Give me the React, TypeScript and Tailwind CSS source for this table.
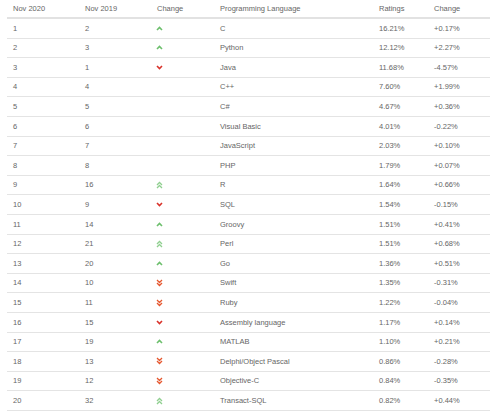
const rows: [string, string, string, string, string, string][] = [
  ['1', '2', 'up', 'C', '16.21%', '+0.17%'],
  ['2', '3', 'up', 'Python', '12.12%', '+2.27%'],
  ['3', '1', 'down', 'Java', '11.68%', '-4.57%'],
  ['4', '4', '', 'C++', '7.60%', '+1.99%'],
  ['5', '5', '', 'C#', '4.67%', '+0.36%'],
  ['6', '6', '', 'Visual Basic', '4.01%', '-0.22%'],
  ['7', '7', '', 'JavaScript', '2.03%', '+0.10%'],
  ['8', '8', '', 'PHP', '1.79%', '+0.07%'],
  ['9', '16', 'upup', 'R', '1.64%', '+0.66%'],
  ['10', '9', 'down', 'SQL', '1.54%', '-0.15%'],
  ['11', '14', 'up', 'Groovy', '1.51%', '+0.41%'],
  ['12', '21', 'upup', 'Perl', '1.51%', '+0.68%'],
  ['13', '20', 'up', 'Go', '1.36%', '+0.51%'],
  ['14', '10', 'downdown', 'Swift', '1.35%', '-0.31%'],
  ['15', '11', 'downdown', 'Ruby', '1.22%', '-0.04%'],
  ['16', '15', 'down', 'Assembly language', '1.17%', '+0.14%'],
  ['17', '19', 'up', 'MATLAB', '1.10%', '+0.21%'],
  ['18', '13', 'downdown', 'Delphi/Object Pascal', '0.86%', '-0.28%'],
  ['19', '12', 'downdown', 'Objective-C', '0.84%', '-0.35%'],
  ['20', '32', 'upup', 'Transact-SQL', '0.82%', '+0.44%'],
]

function Arrow({ kind }: { kind: string }) {
  if (kind === 'up')
    return (
      <svg width="7" height="5" viewBox="0 0 7 5">
        <path d="M1 4 L3.5 1.5 L6 4" fill="none" stroke="#6cbf6c" strokeWidth="1.6" />
      </svg>
    )
  if (kind === 'down')
    return (
      <svg width="7" height="5" viewBox="0 0 7 5">
        <path d="M1 1 L3.5 3.5 L6 1" fill="none" stroke="#d9322a" strokeWidth="1.6" />
      </svg>
    )
  if (kind === 'upup')
    return (
      <svg width="7" height="8" viewBox="0 0 7 8">
        <path d="M1 4 L3.5 1.5 L6 4 M1 7 L3.5 4.5 L6 7" fill="none" stroke="#8fcf8f" strokeWidth="1.3" />
      </svg>
    )
  if (kind === 'downdown')
    return (
      <svg width="7" height="8" viewBox="0 0 7 8">
        <path d="M1 1 L3.5 3.5 L6 1 M1 4 L3.5 6.5 L6 4" fill="none" stroke="#e5572f" strokeWidth="1.3" />
      </svg>
    )
  return null
}

const cols = 'grid grid-cols-[72px_72px_63px_159px_55px_62px]'

export default function App() {
  return (
    <div className="w-[500px] h-[419px] bg-white pl-[7px] text-[7.5px] text-[#666] font-['Liberation_Sans',Arial,sans-serif]">
      <div className="w-[483px]">
        {/* header */}
        <div className={`${cols} h-[19px] items-center border-b-2 border-[#e2e2e2]`}>
          <div className="pl-[6px]">Nov 2020</div>
          <div className="pl-[6px]">Nov 2019</div>
          <div className="pl-[6px]">Change</div>
          <div className="pl-[6px]">Programming Language</div>
          <div className="pl-[6px]">Ratings</div>
          <div className="pl-[6px]">Change</div>
        </div>
        {rows.map((r) => (
          <div key={r[0]} className={`${cols} h-[19.6px] items-center border-b border-[#e4e4e4]`}>
            <div className="pl-[6px]">{r[0]}</div>
            <div className="pl-[6px]">{r[1]}</div>
            <div className="pl-[5px] flex items-center">
              <Arrow kind={r[2]} />
            </div>
            <div className="pl-[6px]">{r[3]}</div>
            <div className="pl-[6px]">{r[4]}</div>
            <div className="pl-[6px]">{r[5]}</div>
          </div>
        ))}
      </div>
    </div>
  )
}
